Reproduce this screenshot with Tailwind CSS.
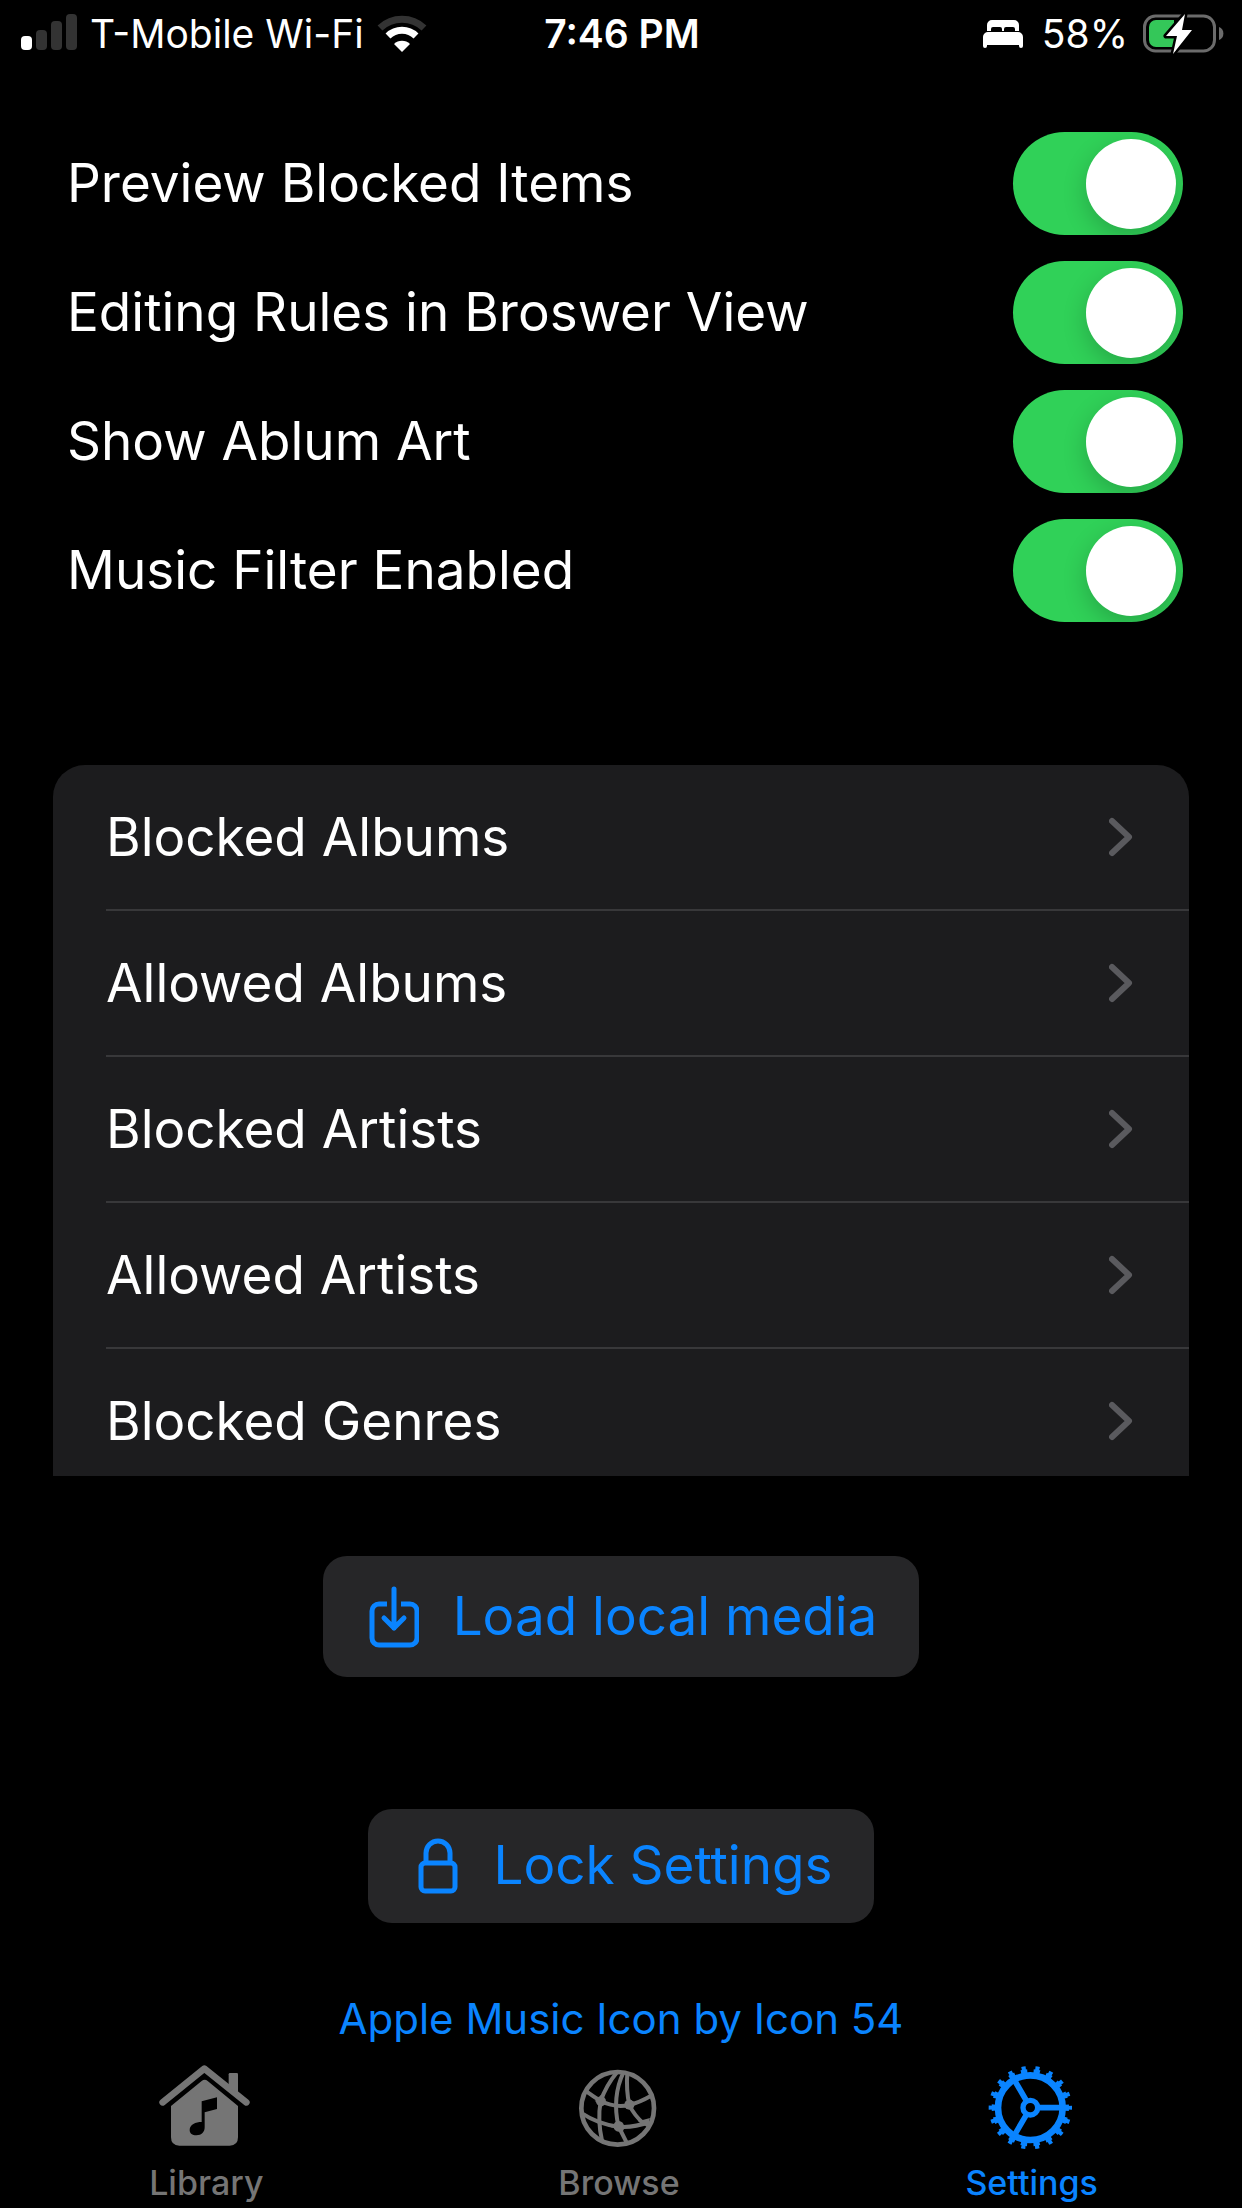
<!DOCTYPE html>
<html lang="en">
<head>
<meta charset="utf-8">
<meta name="viewport" content="width=device-width, initial-scale=1">
<title>Settings</title>
<script src="https://cdn.jsdelivr.net/npm/@tailwindcss/browser@4"></script>
</head>
<body class="flex h-screen flex-col bg-black font-['Inter',sans-serif] text-white">

<!-- Status bar -->
<header class="grid h-[68px] shrink-0 grid-cols-3 items-center pl-5 pr-[18px] text-[39px] leading-[68px]">
  <div class="flex items-center gap-3 whitespace-nowrap">
    <svg class="h-10 w-[58px] shrink-0" viewBox="0 0 58 40" aria-label="Signal strength">
      <rect x="1" y="22" width="11" height="14" rx="4" fill="#fff"/>
      <rect x="16" y="16" width="11" height="20" rx="4" fill="#333"/>
      <rect x="31" y="7" width="11" height="29" rx="4" fill="#333"/>
      <rect x="46" y="0" width="11" height="36" rx="4" fill="#333"/>
    </svg>
    <span>T-Mobile Wi-Fi</span>
    <svg class="h-10 w-[52px] shrink-0" viewBox="0 0 52 40" aria-label="Wi-Fi">
      <path d="M4 14A32 32 0 0 1 48 14" fill="none" stroke="#333" stroke-width="7"/>
      <path d="M12 22A20 20 0 0 1 40 22" fill="none" stroke="#fff" stroke-width="7"/>
      <path d="M26 38L18 30A11.500 11.500 0 0 1 34 30Z" fill="#fff"/>
    </svg>
  </div>
  <div class="text-center font-semibold">7:46 PM</div>
  <div class="flex items-center justify-end">
    <svg class="mr-[18px] h-7 w-[42px]" viewBox="0 0 42 28" fill="#fff" aria-label="Sleep focus">
      <path d="M5 11V5a5 5 0 0 1 5-5H32a5 5 0 0 1 5 5V11H33V9a2 2 0 0 0-2-2H24a2 2 0 0 0-2 2V11H20V9a2 2 0 0 0-2-2H11a2 2 0 0 0-2 2V11Z"/>
      <path d="M1 17a5 5 0 0 1 5-5H36a5 5 0 0 1 5 5V26a2 2 0 0 1-4 0V25H5V26a2 2 0 0 1-4 0Z"/>
    </svg>
    <span class="mr-3.5">58%</span>
    <svg class="h-11 w-[82px]" viewBox="0 0 82 44" aria-label="Battery charging">
      <rect x="2.500" y="4" width="70" height="35" rx="11" fill="none" stroke="#6b6b6b" stroke-width="3"/>
      <path d="M77 15a7 7 0 0 1 0 13Z" fill="#6b6b6b"/>
      <path d="M14 8H32V35H14a7 7 0 0 1-7-7V15a7 7 0 0 1 7-7Z" fill="#34c759"/>
      <path d="M43 2L24 24H35L31 42L50 18H40Z" fill="#fff" stroke="#000" stroke-width="5" paint-order="stroke" stroke-linejoin="round"/>
    </svg>
  </div>
</header>

<main class="flex min-h-0 flex-1 flex-col">
  <!-- Preferences -->
  <section class="flex shrink-0 flex-col gap-[26px] pl-[67px] pr-[59px] pt-16 text-[53px] leading-[103px]">
    <label class="flex items-center justify-between">Preview Blocked Items
      <input type="checkbox" role="switch" checked class="h-[103px] w-[170px] shrink-0 appearance-none overflow-hidden rounded-full bg-[#39393d] p-[7px] before:block before:h-[90px] before:w-[90px] before:rounded-full before:bg-white before:shadow-[0_8px_24px_rgba(0,0,0,0.2)] before:content-[''] checked:bg-[#30d158] checked:pl-[73px]">
    </label>
    <label class="flex items-center justify-between">Editing Rules in Broswer View
      <input type="checkbox" role="switch" checked class="h-[103px] w-[170px] shrink-0 appearance-none overflow-hidden rounded-full bg-[#39393d] p-[7px] before:block before:h-[90px] before:w-[90px] before:rounded-full before:bg-white before:shadow-[0_8px_24px_rgba(0,0,0,0.2)] before:content-[''] checked:bg-[#30d158] checked:pl-[73px]">
    </label>
    <label class="flex items-center justify-between">Show Ablum Art
      <input type="checkbox" role="switch" checked class="h-[103px] w-[170px] shrink-0 appearance-none overflow-hidden rounded-full bg-[#39393d] p-[7px] before:block before:h-[90px] before:w-[90px] before:rounded-full before:bg-white before:shadow-[0_8px_24px_rgba(0,0,0,0.2)] before:content-[''] checked:bg-[#30d158] checked:pl-[73px]">
    </label>
    <label class="flex items-center justify-between">Music Filter Enabled
      <input type="checkbox" role="switch" checked class="h-[103px] w-[170px] shrink-0 appearance-none overflow-hidden rounded-full bg-[#39393d] p-[7px] before:block before:h-[90px] before:w-[90px] before:rounded-full before:bg-white before:shadow-[0_8px_24px_rgba(0,0,0,0.2)] before:content-[''] checked:bg-[#30d158] checked:pl-[73px]">
    </label>
  </section>

  <!-- Rule lists; the list scrolls under the buttons -->
  <ul class="mx-[53px] mt-[143px] min-h-0 flex-1 overflow-y-auto rounded-t-[32px] bg-[#1c1c1e] pl-[53px] text-[53px] leading-[144px] [scrollbar-width:none]">
    <li class="border-b-2 border-[#38383a]"><a href="#" class="flex items-center justify-between pr-14">Blocked Albums
      <svg class="h-10 w-6" viewBox="0 0 24 40" fill="none" stroke="#5a5a5e" stroke-width="6" stroke-linecap="round" stroke-linejoin="round"><path d="M3 4L20 20L3 36"/></svg></a></li>
    <li class="border-b-2 border-[#38383a]"><a href="#" class="flex items-center justify-between pr-14">Allowed Albums
      <svg class="h-10 w-6" viewBox="0 0 24 40" fill="none" stroke="#5a5a5e" stroke-width="6" stroke-linecap="round" stroke-linejoin="round"><path d="M3 4L20 20L3 36"/></svg></a></li>
    <li class="border-b-2 border-[#38383a]"><a href="#" class="flex items-center justify-between pr-14">Blocked Artists
      <svg class="h-10 w-6" viewBox="0 0 24 40" fill="none" stroke="#5a5a5e" stroke-width="6" stroke-linecap="round" stroke-linejoin="round"><path d="M3 4L20 20L3 36"/></svg></a></li>
    <li class="border-b-2 border-[#38383a]"><a href="#" class="flex items-center justify-between pr-14">Allowed Artists
      <svg class="h-10 w-6" viewBox="0 0 24 40" fill="none" stroke="#5a5a5e" stroke-width="6" stroke-linecap="round" stroke-linejoin="round"><path d="M3 4L20 20L3 36"/></svg></a></li>
    <li><a href="#" class="flex items-center justify-between pr-14">Blocked Genres
      <svg class="h-10 w-6" viewBox="0 0 24 40" fill="none" stroke="#5a5a5e" stroke-width="6" stroke-linecap="round" stroke-linejoin="round"><path d="M3 4L20 20L3 36"/></svg></a></li>
  </ul>

  <!-- Actions -->
  <div class="flex shrink-0 flex-col items-center pt-20 text-[53px] text-[#0a84ff]">
    <button type="button" class="flex h-[121px] items-center gap-[34px] rounded-3xl bg-[#262628] pl-[46px] pr-[42px]">
      <svg class="h-[62px] w-[50px]" viewBox="0 0 50 62" fill="none" stroke="currentColor" stroke-width="5" stroke-linecap="round" stroke-linejoin="round">
        <path stroke-linecap="butt" d="M18 18H10a7 7 0 0 0-7 7V52a7 7 0 0 0 7 7H41a7 7 0 0 0 7-7V25a7 7 0 0 0-7-7H32"/>
        <path d="M25 3V42M15 32L25 42L35 32"/>
      </svg>
      Load local media
    </button>
    <button type="button" class="mt-[132px] flex h-[114px] items-center gap-9 rounded-3xl bg-[#262628] pl-[50px] pr-[42px]">
      <svg class="h-14 w-10" viewBox="0 0 40 56" fill="none" stroke="currentColor" stroke-width="5">
        <rect x="3" y="25" width="34" height="28" rx="4"/>
        <path d="M8 25V15a12 12 0 0 1 24 0V25"/>
      </svg>
      Lock Settings
    </button>
    <a href="#" class="mt-[68px] text-[42px] leading-[56px]">Apple Music Icon by Icon 54</a>
  </div>
</main>

<!-- Tab bar -->
<nav class="grid shrink-0 grid-cols-3 pb-[5px] pr-1 pt-4 text-[34px] font-medium leading-10 text-[#757575]">
  <a href="#" class="flex flex-col items-center gap-3">
    <svg class="h-[88px] w-24" viewBox="87 69 288 264" fill="none" stroke="currentColor" stroke-linecap="round" stroke-linejoin="round">
      <path d="M101 187L226 86L352 187" stroke-width="20"/>
      <path d="M299 140V103a4 4 0 0 1 4-4H323a4 4 0 0 1 4 4V162Z" fill="currentColor" stroke="none"/>
      <path fill-rule="evenodd" stroke="none" fill="currentColor" d="M218 123Q227 116 236 123L327 198V292Q327 317 302 317H151Q126 317 126 292V198ZM218 184V246C200 246 182 254 182 270C182 280 190 286 202 286C218 286 227 276 227 262V217L264 207V172Z"/>
    </svg>
    Library
  </a>
  <a href="#" class="flex flex-col items-center gap-3">
    <svg class="h-[88px] w-24" viewBox="99 69 288 264" fill="none" stroke="currentColor" stroke-width="12">
      <circle cx="239" cy="205" r="109" stroke-width="14"/>
      <path d="M145 154Q170 172 188 183Q230 204 274 195Q305 187 338 168"/>
      <path d="M132 220Q180 252 241 260Q285 264 335 246"/>
      <path d="M236 98Q205 135 188 183Q178 240 192 302"/>
      <path d="M256 98Q222 170 241 258L266 308"/>
      <path d="M268 98Q264 150 274 195Q288 225 318 252"/>
      <g fill="currentColor" stroke="none"><path d="M188 164Q192 178 210 188Q196 192 186 206Q184 192 170 182Q182 178 188 164Z"/><path d="M271 172Q278 184 296 188Q284 198 284 212Q274 202 252 200Q268 190 271 172Z"/><path d="M236 236Q244 250 266 260Q254 266 254 280Q240 266 218 262Q234 254 236 236Z"/><circle cx="189" cy="184" r="15"/><circle cx="274" cy="194" r="15"/><circle cx="242" cy="259" r="16"/><path d="M300 244L336 234L328 262Z"/></g>
    </svg>
    Browse
  </a>
  <a href="#" aria-current="page" class="flex flex-col items-center gap-3 text-[#0a84ff]">
    <svg class="h-[88px] w-24" viewBox="111 69 288 264" fill="none" stroke="currentColor">
      <circle cx="250" cy="203" r="97" stroke-width="20"/>
      <circle cx="250" cy="203" r="110" stroke-width="12" pathLength="180" stroke-dasharray="5 5" stroke-dashoffset="2.500"/>
      <circle cx="250" cy="203" r="118" stroke-width="14" pathLength="180" stroke-dasharray="3 7" stroke-dashoffset="1.500"/>
      <circle cx="250" cy="203" r="22" stroke-width="16"/>
      <path d="M276 203H345M237 180L202 120M237 226L202 286" stroke-width="17"/>
    </svg>
    Settings
  </a>
</nav>
</body>
</html>
